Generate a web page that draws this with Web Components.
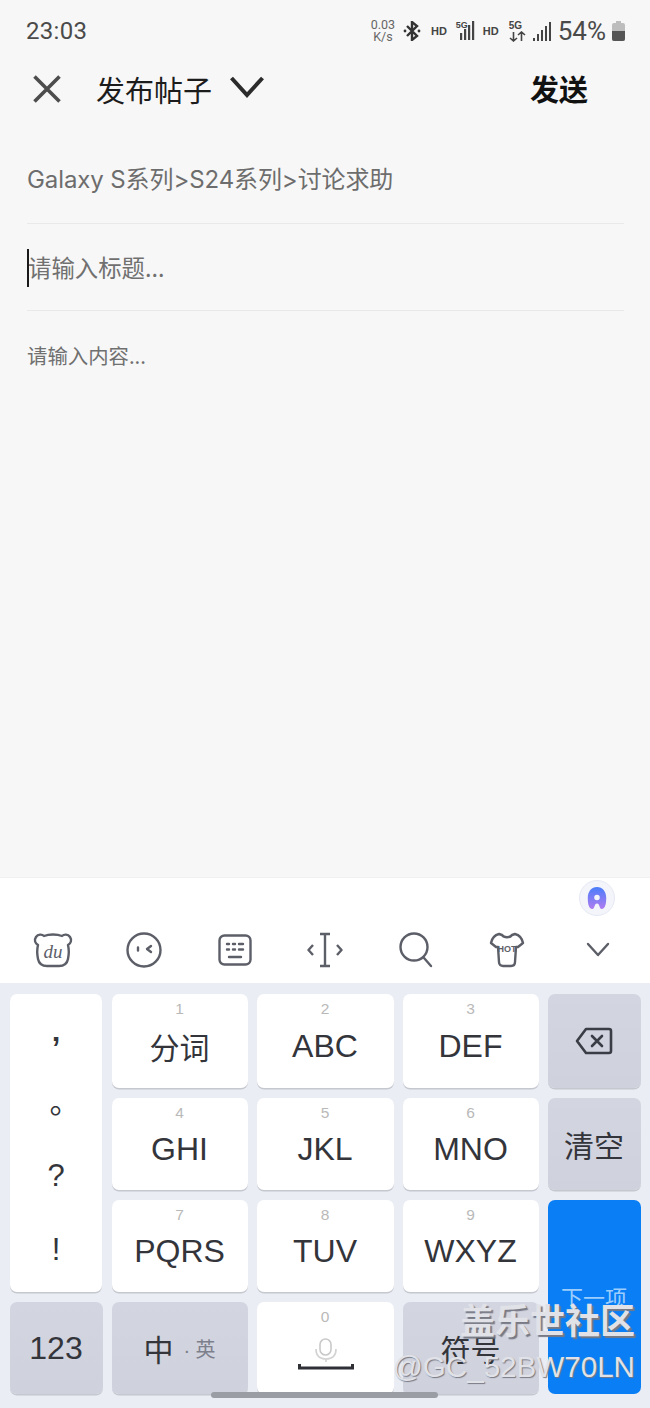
<!DOCTYPE html>
<html>
<head>
<meta charset="utf-8">
<style>
  html, body { margin: 0; padding: 0; }
  body {
    width: 650px; height: 1408px; overflow: hidden;
    background: #f7f7f7;
    font-family: "Liberation Sans", "Noto Sans CJK SC", sans-serif;
    display: flex; flex-direction: column; position: relative;
  }
</style>
</head>
<body>
<status-bar></status-bar>
<app-header></app-header>
<post-form></post-form>
<kb-toolbar></kb-toolbar>
<kb-panel>
  <kb-key class="punct"><span>’</span><span>。</span><span>?</span><span>!</span></kb-key>
  <kb-key num="1" class="zh">分词</kb-key>
  <kb-key num="2">ABC</kb-key>
  <kb-key num="3">DEF</kb-key>
  <kb-key kind="fn"><svg width="38" height="30" viewBox="0 0 38 30" fill="none" stroke="#3a3d46" stroke-width="2.6" stroke-linejoin="round" stroke-linecap="round"><path d="M11 3h23a2 2 0 0 1 2 2v20a2 2 0 0 1-2 2H11L2 15z"/><path d="M17 10l10 10M27 10L17 20"/></svg></kb-key>
  <kb-key num="4">GHI</kb-key>
  <kb-key num="5">JKL</kb-key>
  <kb-key num="6">MNO</kb-key>
  <kb-key kind="fn" class="zh">清空</kb-key>
  <kb-key num="7">PQRS</kb-key>
  <kb-key num="8">TUV</kb-key>
  <kb-key num="9">WXYZ</kb-key>
  <kb-key kind="enter">下一项</kb-key>
  <kb-key kind="fn">123</kb-key>
  <kb-key kind="fn" class="zh"><span>中</span><small>· 英</small></kb-key>
  <kb-key num="0" kind="space"></kb-key>
  <kb-key kind="fn" class="zh">符号</kb-key>
</kb-panel>
<home-bar></home-bar>
<water-mark></water-mark>

<script>
const cjk = '"Noto Sans CJK SC", sans-serif';

class StatusBar extends HTMLElement {
  constructor() {
    super();
    this.attachShadow({ mode: 'open' });
    const bars = (n) => [3, 7, 11, 15, 19].slice(5 - n).map((h, i) =>
      `<rect x="${i * 4}" y="${19 - h}" width="2.2" height="${h}"/>`).join('');
    this.shadowRoot.innerHTML = `<style>
      :host { display: flex; align-items: center; height: 62px; padding: 0 25px 0 26px; box-sizing: border-box;
              font-family: Roboto, "Liberation Sans", sans-serif; color: #4a4a4a; }
      .time { font-size: 24px; letter-spacing: .3px; flex: 1; }
      .right { display: flex; align-items: center; }
      .speed { font-size: 12.5px; line-height: 12.5px; text-align: center; width: 28px; color: #666; margin-right: 6px; }
      .hd { font: bold 11px "Liberation Sans", sans-serif; color: #444; }
      .net { position: relative; display: block; }
      .net b { position: absolute; font: bold 9px "Liberation Sans", sans-serif; color: #444; left: 0; top: -1px; }
      .pct { font-size: 26px; color: #4a4a4a; margin-left: 7px; margin-right: 6px; }
    </style>
    <div class="time">23:03</div>
    <div class="right">
      <div class="speed">0.03<br>K/s</div>
      <svg width="18" height="20" viewBox="0 0 18 20" fill="none" stroke="#333" stroke-width="2.4"><path d="M4 5l10 10-5 4V1l5 4L4 15"/><circle cx="2" cy="10" r="1.4" fill="#333" stroke="none"/><circle cx="16" cy="10" r="1.4" fill="#333" stroke="none"/></svg>
      <span class="hd" style="margin-left:10px">HD</span>
      <span class="net" style="margin-left:9px;width:22px;height:20px"><b>5G</b><svg width="22" height="20" viewBox="-4 0 22 20" fill="#444" style="position:absolute;left:0;top:0">${bars(4)}</svg></span>
      <span class="hd" style="margin-left:5px">HD</span>
      <span class="net" style="margin-left:10px;width:17px;height:22px"><b style="font-size:10px;top:0">5G</b><svg width="17" height="11" viewBox="0 0 17 11" fill="none" stroke="#444" stroke-width="1.6" style="position:absolute;left:0;top:11px"><path d="M4.5 1v9M1 7l3.5 3L8 7M12.5 10V1M9 4l3.5-3L16 4"/></svg></span>
      <svg style="margin-left:7px" width="18" height="19" viewBox="0 0 18 19" fill="#444">${bars(5).replace(/width="2.2"/g, 'width="2"')}</svg>
      <span class="pct">54%</span>
      <svg width="13" height="20" viewBox="0 0 13 20"><rect x="4" y="0" width="5" height="3" fill="#bdbdbd"/><rect x="0" y="2" width="13" height="18" rx="2" fill="#bdbdbd"/><path d="M0 10h13v8a2 2 0 0 1-2 2H2a2 2 0 0 1-2-2z" fill="#555"/></svg>
    </div>`;
  }
}

class AppHeader extends HTMLElement {
  constructor() {
    super();
    this.attachShadow({ mode: 'open' });
    this.shadowRoot.innerHTML = `<style>
      :host { display: flex; align-items: center; height: 54px; padding-left: 33px; padding-right: 62px; box-sizing: border-box;
              font-family: ${cjk}; color: #1c1c1c; }
      .title { font-size: 29px; line-height: 40px; margin-left: 35px; }
      .chev { margin-left: 18px; margin-top: -4px; }
      .send { margin-left: auto; font-size: 29px; font-weight: 700; line-height: 40px; color: #111; margin-top: -2px; }
    </style>
    <svg width="28" height="28" viewBox="0 0 28 28" stroke="#4d4d4d" stroke-width="3.6" fill="none"><path d="M1.5 1.5l25 25M26.5 1.5l-25 25"/></svg>
    <span class="title">发布帖子</span>
    <svg class="chev" width="34" height="22" viewBox="0 0 34 22" stroke="#2b2b2b" stroke-width="4" fill="none"><path d="M1.5 2L17 19 32.5 2"/></svg>
    <span class="send">发送</span>`;
  }
}

class PostForm extends HTMLElement {
  constructor() {
    super();
    this.attachShadow({ mode: 'open' });
    this.shadowRoot.innerHTML = `<style>
      :host { display: block; flex: 1; padding: 0 26px 0 27px; font-family: ${cjk}; color: #6d6d6d; }
      .row { border-bottom: 1.5px solid #e9e9e9; display: flex; align-items: center; box-sizing: border-box; }
      .crumb { height: 107.5px; padding-top: 17px; font-size: 24px; font-family: Inter, ${cjk}; letter-spacing: -.1px; }
      .title { height: 87px; font-size: 23.4px; position: relative; color: #707070; }
      .caret { position: absolute; left: 0; top: 25px; width: 2px; height: 38px; background: #1a1a1a; }
      .body { font-size: 20.4px; padding-top: 29px; color: #707070; }
      .title span { margin-left: 1px; }
    </style>
    <div class="row crumb">Galaxy S系列&gt;S24系列&gt;讨论求助</div>
    <div class="row title"><i class="caret"></i><span>请输入标题...</span></div>
    <div class="body">请输入内容...</div>`;
  }
}

class KbToolbar extends HTMLElement {
  constructor() {
    super();
    this.attachShadow({ mode: 'open' });
    const s = 'fill="none" stroke="#5c5e68" stroke-width="2.4" stroke-linecap="round" stroke-linejoin="round"';
    this.shadowRoot.innerHTML = `<style>
      :host { display: block; height: 106px; background: #fff; position: relative; box-sizing: border-box; padding: 39px 7px 0 8px; border-top: 1px solid #f0f0f0; }
      .tools { display: grid; grid-template-columns: repeat(7, 1fr); justify-items: center; align-items: center; height: 66px; }
      .ai { position: absolute; left: 579px; top: 2px; width: 36px; height: 36px; border-radius: 50%; background: #f3f5fb; border: 1px solid #e6e9f4; box-sizing: border-box; display: flex; align-items: center; justify-content: center; }
      text { font-family: "Liberation Sans", sans-serif; }
    </style>
    <div class="ai"><svg width="22" height="24" viewBox="0 0 22 26"><defs><linearGradient id="g" x1="0" y1="0" x2="0" y2="1"><stop offset="0" stop-color="#4a7dfa"/><stop offset="1" stop-color="#b07cf0"/></linearGradient></defs><path fill="url(#g)" fill-rule="evenodd" d="M11 1c6 0 10 5 10 12 0 6-1 12-5 12-2.500 0-2-6-5-6s-2.500 6-5 6c-4 0-5-6-5-12C1 6 5 1 11 1zm0 8.500a3 3 0 1 0 0 6 3 3 0 0 0 0-6z"/></svg></div>
    <div class="tools">
      <svg width="40" height="36" viewBox="0 0 40 36" ${s}><path d="M3 5c2-3 6-3 8-1 5-2 13-2 18 0 2-2 6-2 8 1 2 3 1 6-2 8 1 4 1 9 0 14-1 5-5 7-9 7H14c-4 0-8-2-9-7-1-5-1-10 0-14-3-2-4-5-2-8z"/><text x="20" y="26" font-size="19" font-style="italic" text-anchor="middle" fill="#5c5e68" stroke="none" style="font-family:'Liberation Serif',serif">du</text></svg>
      <svg width="36" height="36" viewBox="0 0 36 36" ${s}><ellipse cx="18" cy="18" rx="16.500" ry="16.500"/><path d="M12 15.500v3M25 14l-4 3 4 3"/></svg>
      <svg width="34" height="32" viewBox="0 0 34 32" ${s}><rect x="1.500" y="1.500" width="31" height="29" rx="5"/><path d="M9 10h2M15 10h2M21 10h4M9 15.500h2M15 15.500h2M21 15.500h4M11 23h12"/></svg>
      <svg width="36" height="36" viewBox="0 0 36 36" ${s}><path d="M13 2h10M18 2v32M13 34h10M6 13l-4.500 5L6 23M30 13l4.500 5L30 23" stroke-linecap="butt"/></svg>
      <svg width="34" height="36" viewBox="0 0 34 36" ${s}><circle cx="15" cy="15" r="13.500"/><path d="M25 26l7 8"/></svg>
      <svg width="36" height="36" viewBox="0 0 36 36" ${s}><path d="M10 2l3 1c2 3 8 3 10 0l3-1c4 1 7 4 8 9l-5 4h-2l-1 15c0 3-2 4-4 4H14c-2 0-4-1-4-4L9 15H7l-5-4c1-5 4-8 8-9z"/><text x="18" y="20" font-size="9" font-weight="700" text-anchor="middle" fill="#5c5e68" stroke="none">HOT</text></svg>
      <svg width="24" height="16" viewBox="0 0 24 16" ${s}><path d="M2 2l10 11L22 2"/></svg>
    </div>`;
  }
}

class KbPanel extends HTMLElement {
  constructor() {
    super();
    this.attachShadow({ mode: 'open' });
    this.shadowRoot.innerHTML = `<style>
      :host { display: grid; box-sizing: border-box; height: 425px; padding: 11px 9px 14px 9.5px; background: #eaedf4;
              grid-template-columns: 93px 136px 137px 136px 93px; grid-template-rows: 94px 92px 92px 92px; column-gap: 9px; row-gap: 10px; }
    </style><slot></slot>`;
  }
}

class KbKey extends HTMLElement {
  constructor() {
    super();
    this.attachShadow({ mode: 'open' });
    this.shadowRoot.innerHTML = `<style>
      :host { display: flex; align-items: center; justify-content: center; position: relative; border-radius: 7px;
              background: #fff; box-shadow: 0 1.5px 0 #c6c8d0; color: #33353b; font-size: 32px;
              font-family: "Liberation Sans", "Noto Sans CJK SC", sans-serif; padding-top: 10px; box-sizing: border-box; }
      :host(.zh) { font-size: 30px; }
      :host([kind="fn"]) { background: linear-gradient(#d3d5e0, #cfd1dc); padding-top: 0; }
      :host([kind="enter"]) { background: #0a7ef5; color: #9ccdfc; font-size: 22px; grid-row: 3 / span 2; grid-column: 5; align-items: flex-start; padding: 80px 0 0; box-shadow: none; }
      :host([kind="space"]) { padding: 0; }
      :host(.punct) { grid-row: span 3; flex-direction: column; justify-content: flex-start; padding: 0; font-size: 31px; margin: 0 .5px; }
      .num { position: absolute; top: 6px; left: 0; right: 0; text-align: center; font-size: 15.5px; color: #b9b9b9; line-height: 18px; }
      .sp { display: none; }
      :host([kind="space"]) .sp { display: block; position: absolute; left: 41px; top: 36px; }
      ::slotted(span) { display: block; }
    </style>
    <span class="num"></span><svg class="sp" width="56" height="36" viewBox="0 0 56 36" fill="none"><rect x="22" y="1" width="11" height="16" rx="5.5" stroke="#c9c9c9" stroke-width="1.6"/><path d="M18 11c0 7 4 10 10 10s10-3 10-10M28 21v3" stroke="#d3d3d3" stroke-width="1.6"/><path d="M1.5 26v4h53v-4" stroke="#2e3036" stroke-width="3"/></svg><slot></slot>`;
  }
  connectedCallback() {
    this.shadowRoot.querySelector('.num').textContent = this.getAttribute('num') || '';
    // left column holds four punctuation marks placed by hand
    if (this.classList.contains('punct')) {
      const shift = ['translate(0,17px)', 'translate(9px,-4px)', 'translateY(-6px)', 'translateY(-7px)'];
      Array.from(this.children).forEach((s, i) => {
        s.style.height = '75px';
        s.style.lineHeight = '75px';
        s.style.textAlign = 'center';
        s.style.color = '#33353b';
        s.style.transform = shift[i];
        if (i == 0) s.style.fontWeight = '700';
      });
    }
    const small = this.querySelector('small');
    if (small) {
      small.style.cssText = 'font-size:20px;color:#7d7f8c;margin-left:10px';
    }
  }
}

class HomeBar extends HTMLElement {
  constructor() {
    super();
    this.attachShadow({ mode: 'open' });
    this.shadowRoot.innerHTML = `<style>
      :host { position: absolute; left: 211px; top: 1392px; width: 227px; height: 6px; border-radius: 3px; background: #9b9da5; display: block; }
    </style>`;
  }
}

class WaterMark extends HTMLElement {
  constructor() {
    super();
    this.attachShadow({ mode: 'open' });
    this.shadowRoot.innerHTML = `<style>
      :host { position: absolute; right: 15px; top: 1294px; display: block; text-align: right; color: #e1e2e8; pointer-events: none; }
      div { text-shadow: 2px 2px 1px #777a85; white-space: nowrap; }
      .a { font: 700 35px/50px ${cjk}; }
      .b { font: 29.6px/40px "Liberation Sans", sans-serif; text-shadow: 1px 1px 1px #777a85; margin-top: 3px; }
    </style>
    <div class="a">盖乐世社区</div>
    <div class="b">@GC_52BW70LN</div>`;
  }
}

customElements.define('status-bar', StatusBar);
customElements.define('app-header', AppHeader);
customElements.define('post-form', PostForm);
customElements.define('kb-toolbar', KbToolbar);
customElements.define('kb-panel', KbPanel);
customElements.define('kb-key', KbKey);
customElements.define('home-bar', HomeBar);
customElements.define('water-mark', WaterMark);
</script>
</body>
</html>
